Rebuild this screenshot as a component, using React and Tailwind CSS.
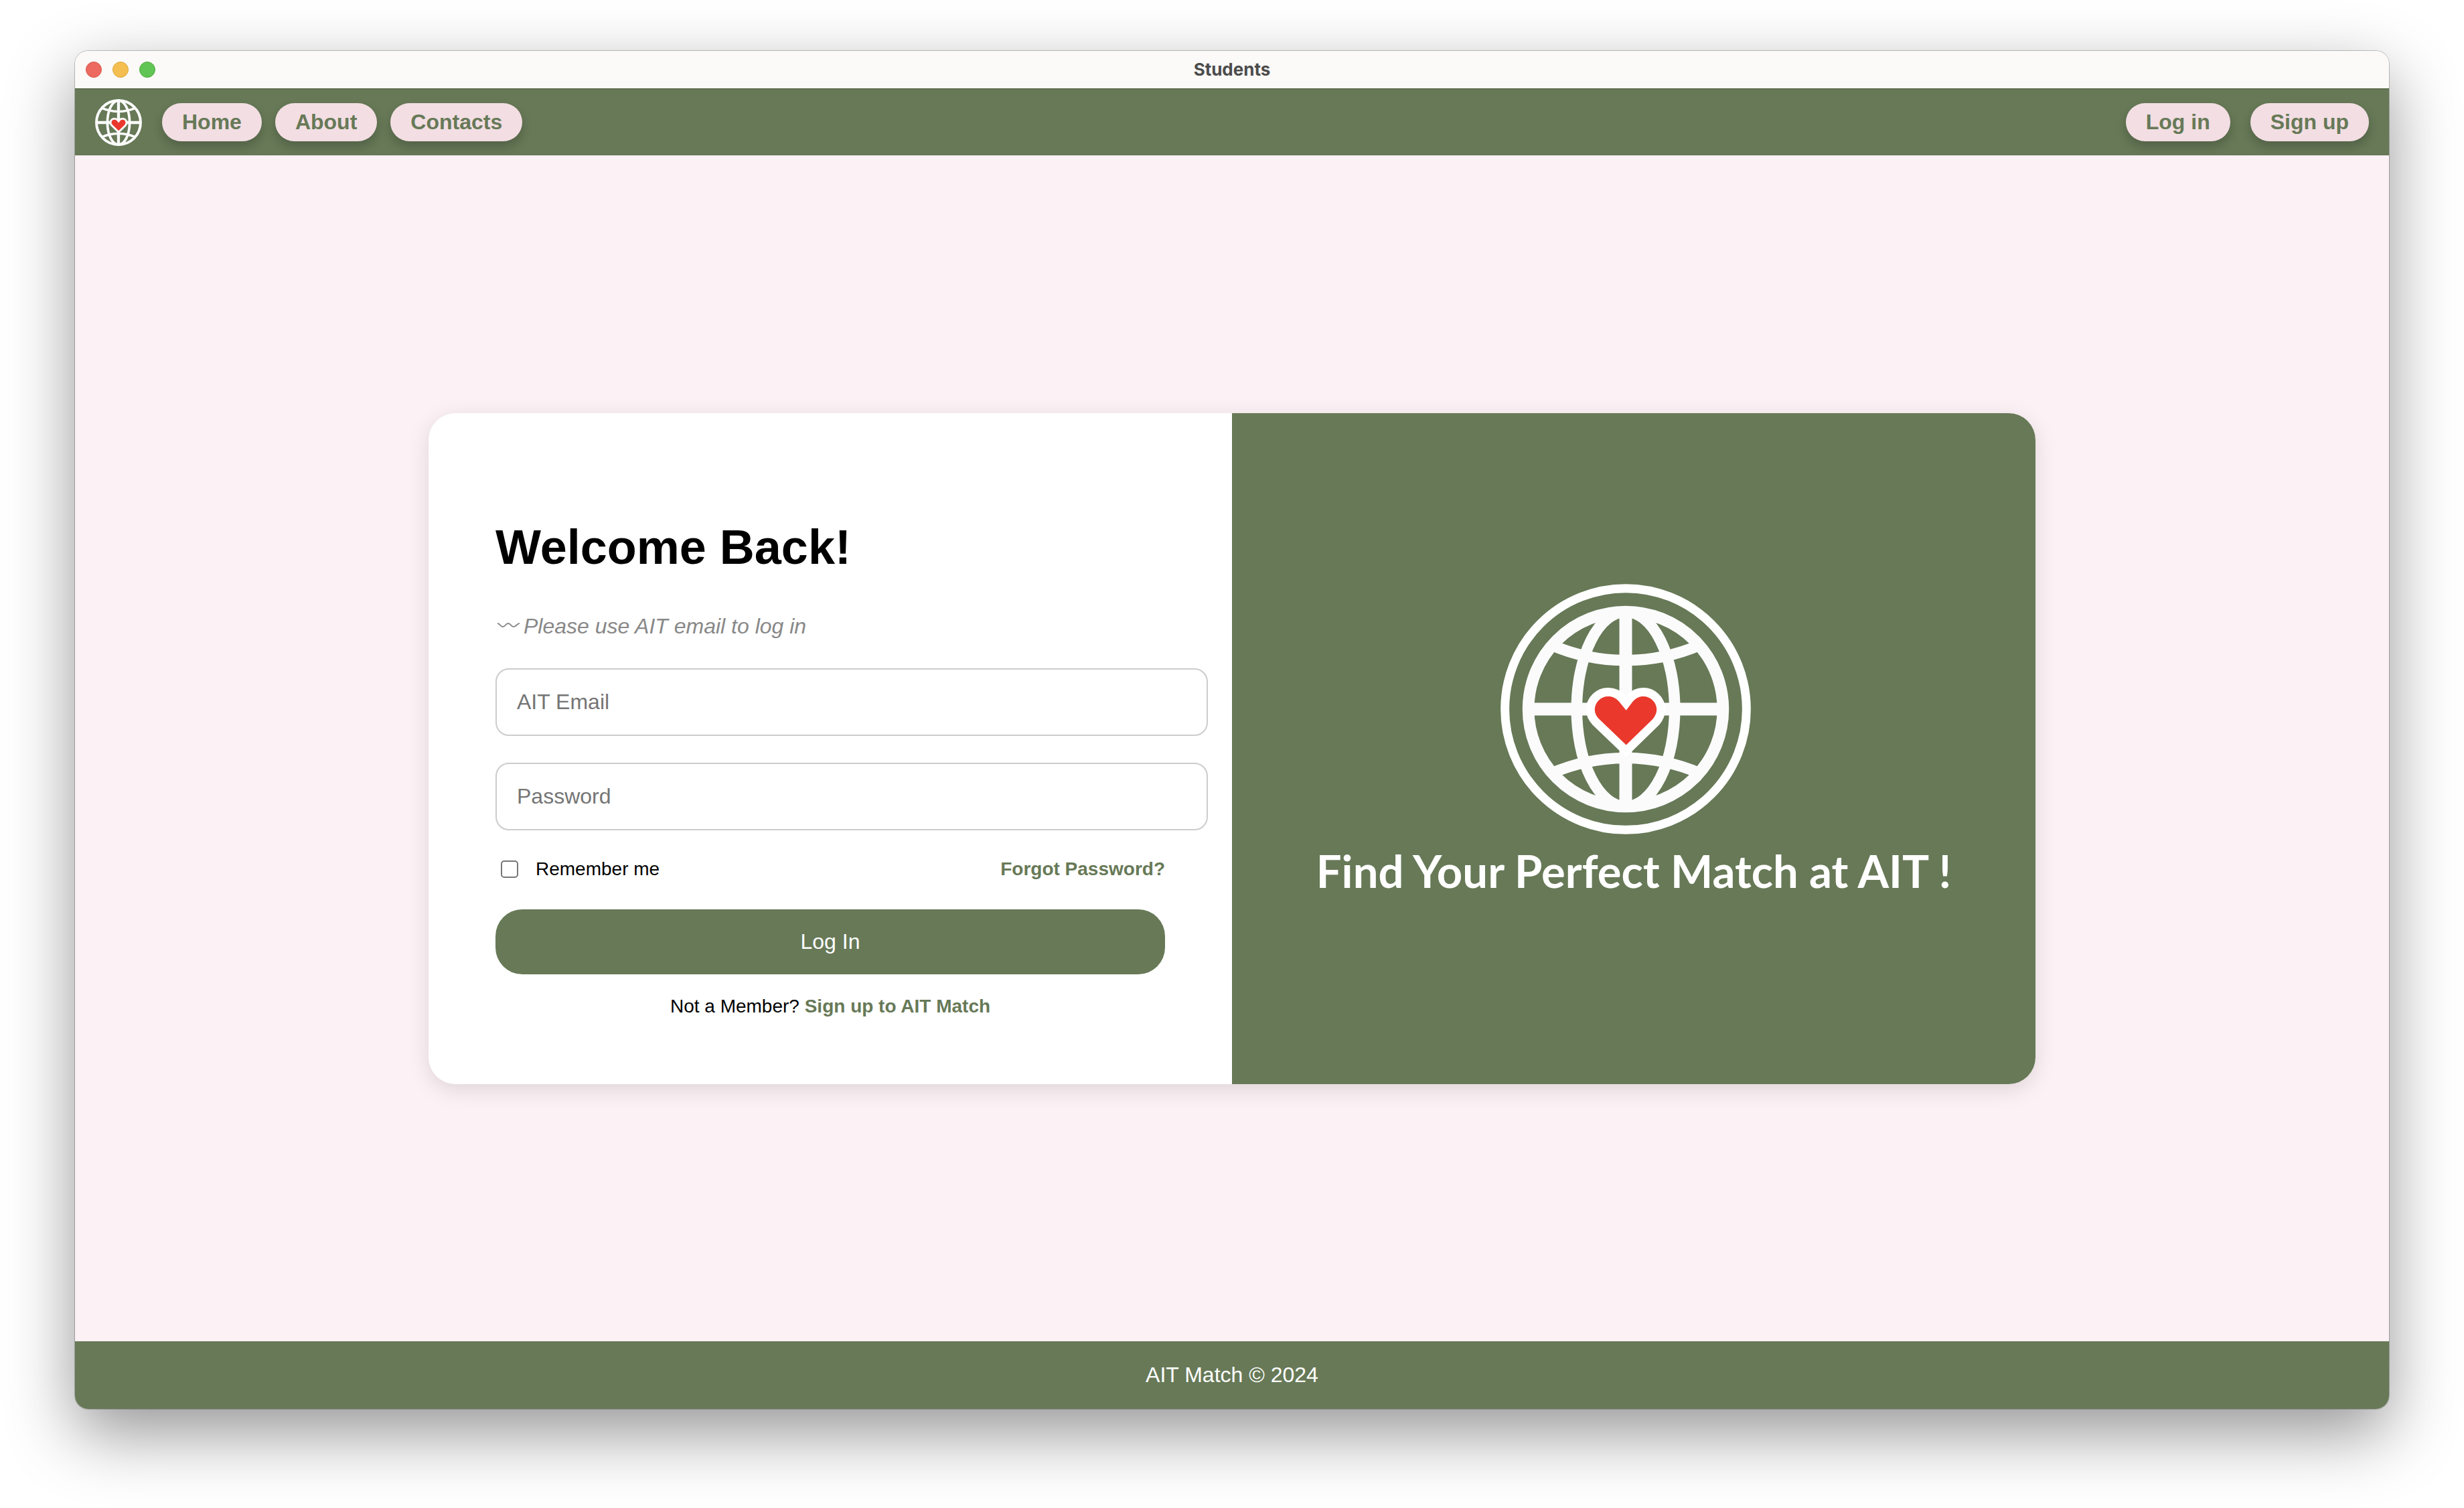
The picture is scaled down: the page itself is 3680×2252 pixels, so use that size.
function GlobeMark() {
  return (
    <>
      <g fill="none" stroke="#fbfbfb">
        <circle cx="683" cy="657" r="437" strokeWidth="53" />
        <ellipse cx="683" cy="657" rx="220" ry="437" strokeWidth="50" />
        <path d="M683 210V1104M236 657H1130" strokeWidth="57" />
        <path d="M345 367A844 844 0 0 0 1021 367" strokeWidth="50" />
        <path d="M345 947A844 844 0 0 1 1021 947" strokeWidth="50" />
      </g>
      <path
        d="M685 818L562 700C550 688 544 674 544 658A60 60 0 0 1 604 600C624 600 640 608 652 622L685 662L716 622C728 608 744 600 762 600A60 60 0 0 1 822 658C822 674 816 688 804 702Z"
        fill="#ea382c"
        stroke="#ffffff"
        strokeWidth="78"
        paintOrder="stroke"
        strokeLinejoin="miter"
      />
    </>
  );
}

function NavPill({ children }) {
  return (
    <a
      href="#"
      className="rounded-full bg-[#f2dee3] px-[30px] py-[10px] text-[32px] leading-[37px] font-bold whitespace-nowrap text-[#677957] shadow-[0_8px_16px_rgba(0,0,0,0.2)]"
    >
      {children}
    </a>
  );
}

function TitleBar() {
  return (
    <div className="grid h-14 grid-cols-[1fr_auto_1fr] items-center bg-[#fbfaf8] px-4">
      <div className="flex gap-4">
        <button type="button" aria-label="Close" className="size-6 rounded-full border border-[#d8564b] bg-[#ec6a5f]" />
        <button type="button" aria-label="Minimize" className="size-6 rounded-full border border-[#dba53c] bg-[#f4bf50]" />
        <button type="button" aria-label="Zoom" className="size-6 rounded-full border border-[#52a93f] bg-[#61c555]" />
      </div>
      <h1 className="font-['Inter','Liberation_Sans',sans-serif] text-[26px] leading-8 font-bold text-[#4c4c4c]">
        Students
      </h1>
    </div>
  );
}

function NavBar() {
  return (
    <nav className="flex h-[100px] items-center justify-between border-t border-[#43532f] bg-[#677957] px-[30px]">
      <div className="flex items-center gap-5">
        <a href="#" aria-label="AIT Match" className="mr-[10px]">
          <svg viewBox="219 193 928 928" className="size-[70px]">
            <GlobeMark />
          </svg>
        </a>
        <NavPill>Home</NavPill>
        <NavPill>About</NavPill>
        <NavPill>Contacts</NavPill>
      </div>
      <div className="flex items-center gap-[30px]">
        <NavPill>Log in</NavPill>
        <NavPill>Sign up</NavPill>
      </div>
    </nav>
  );
}

function Field({ label, type }) {
  return (
    <input
      type={type}
      aria-label={label}
      placeholder={label}
      className="mb-10 block w-[calc(100%+64px)] rounded-[20px] border-2 border-[#cccccc] bg-white px-[30px] py-[30px] text-[32px] leading-[37px] text-black placeholder:text-[#757575]"
    />
  );
}

function LoginForm() {
  return (
    <form className="px-[100px] pt-40 pb-[98px]" onSubmit={(event) => event.preventDefault()}>
      <h2 className="text-[72px] leading-20 font-bold text-black">Welcome Back!</h2>
      <p className="mt-[60px] mb-[45px] flex items-center text-[32px] leading-9 text-[#888888] italic">
        <svg viewBox="0 0 42 36" className="h-9 w-[42px]" fill="none" stroke="#888888" strokeWidth="2">
          <path d="M3 14C7 14 7 19 11 19S15 14 19 14S23 19 27 19S32 14 36 14" />
        </svg>
        Please use AIT email to log in
      </p>
      <Field label="AIT Email" type="email" />
      <Field label="Password" type="password" />
      <div className="flex items-center justify-between text-[28px] leading-9">
        <label className="flex items-center gap-[26px] pl-2 text-black">
          <input
            type="checkbox"
            className="size-[26px] appearance-none rounded-[5px] border-2 border-[#767676] bg-white checked:bg-[#677957]"
          />
          Remember me
        </label>
        <a href="#" className="font-bold text-[#677957]">
          Forgot Password?
        </a>
      </div>
      <button
        type="submit"
        className="mt-[42px] w-full rounded-[40px] bg-[#677957] py-[30px] text-[32px] leading-[37px] text-white"
      >
        Log In
      </button>
      <p className="mt-[30px] text-center text-[28px] leading-9 text-black">
        Not a Member?{" "}
        <a href="#" className="font-bold text-[#677957]">
          Sign up to AIT Match
        </a>
      </p>
    </form>
  );
}

function Promo() {
  return (
    <div className="flex flex-col items-center justify-center bg-[#677957] pb-6 text-white">
      <svg viewBox="121 95 1124 1124" className="mr-6 size-[374px]" role="img" aria-label="AIT Match logo">
        <circle cx="683" cy="657" r="542" fill="none" stroke="#ffffff" strokeWidth="39" />
        <GlobeMark />
      </svg>
      <p className="mt-[14px] text-center font-['Lato','Liberation_Sans',sans-serif] text-[67px] leading-20 font-bold">
        Find Your Perfect Match at AIT !
      </p>
    </div>
  );
}

export default function App() {
  return (
    <div className="flex min-h-screen flex-col bg-white px-28 pt-[76px] pb-[148px] font-['Liberation_Sans',Arial,sans-serif]">
      <div className="flex flex-1 flex-col rounded-[20px] shadow-[0_0_0_1px_rgba(0,0,0,0.22),0_36px_100px_rgba(0,0,0,0.42)]">
        <div className="flex flex-1 flex-col overflow-hidden rounded-[20px]">
          <TitleBar />
          <NavBar />
          <main className="flex flex-1 items-center justify-center bg-[#fcf1f5]">
            <section className="grid w-full max-w-[2400px] grid-cols-2 overflow-hidden rounded-[40px] bg-white shadow-[0_8px_32px_rgba(0,0,0,0.12)]">
              <LoginForm />
              <Promo />
            </section>
          </main>
          <footer className="bg-[#677957] py-8 text-center text-[32px] leading-[37px] text-white">
            AIT Match © 2024
          </footer>
        </div>
      </div>
    </div>
  );
}
